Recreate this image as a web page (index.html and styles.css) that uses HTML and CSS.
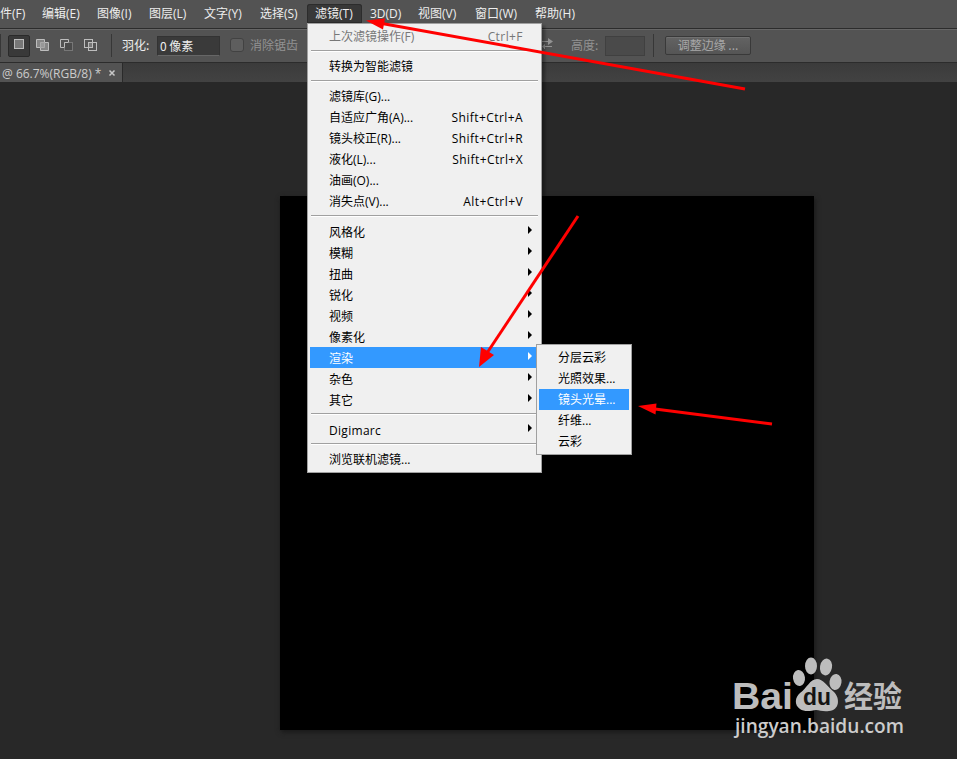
FILE: index.html
```html
<!DOCTYPE html>
<html lang="zh-CN">
<head>
    <meta charset="UTF-8">
    <title>Photoshop</title>
    <link rel="stylesheet" href="styles.css">
</head>
<body>
    <div class="app">
        <div class="menu-bar">
            <div class="menu-title">文件(F)</div>
            <div class="menu-title">编辑(E)</div>
            <div class="menu-title">图像(I)</div>
            <div class="menu-title">图层(L)</div>
            <div class="menu-title">文字(Y)</div>
            <div class="menu-title">选择(S)</div>
            <div class="menu-title open">滤镜(T)</div>
            <div class="menu-title">3D(D)</div>
            <div class="menu-title">视图(V)</div>
            <div class="menu-title">窗口(W)</div>
            <div class="menu-title">帮助(H)</div>
        </div>

        <div class="options-bar">
            <div class="options-left">
                <div class="divider"></div>
                <div class="mode active">
                    <svg width="16" height="16"><rect x="3.5" y="2.5" width="9" height="9" fill="#777" stroke="#bbb"/></svg>
                </div>
                <div class="mode">
                    <svg width="16" height="16"><path d="M2.5 2.5h8v3h4v8h-8v-3h-4z" fill="#858585" stroke="#bdbdbd"/><path d="M6.500 10.500v-5h4v5z" fill="#989898" stroke="#a8a8a8"/></svg>
                </div>
                <div class="mode">
                    <svg width="16" height="16"><rect x="6.500" y="5.500" width="8" height="8" fill="#4b4b4b" stroke="#777"/><path d="M6 10.500H2.500v-8h8V5M6.500 10.500v-5h4" fill="none" stroke="#bdbdbd"/></svg>
                </div>
                <div class="mode">
                    <svg width="16" height="16"><rect x="2.500" y="2.500" width="8" height="8" fill="none" stroke="#bdbdbd"/><rect x="6.500" y="5.500" width="8" height="8" fill="none" stroke="#bdbdbd"/><rect x="7" y="6" width="3" height="4" fill="#777"/></svg>
                </div>
                <div class="divider second"></div>
                <div class="label">羽化:</div>
                <div class="field">0 像素</div>
                <div class="checkbox"></div>
                <div class="label dim">消除锯齿</div>
            </div>
            <div class="options-right">
                <svg class="swap" width="13" height="14"><path d="M0 4.500h8M3 9.500h8M3.500 9v3" fill="none" stroke="#929292"/><path d="M7 1l5 3.500-5 3.500zM4 7L1 9.500 4 12z" fill="#929292"/></svg>
                <div class="label height-label">高度:</div>
                <div class="field empty"></div>
                <div class="divider third"></div>
                <div class="refine">调整边缘 ...</div>
            </div>
        </div>

        <div class="tab-bar">
            <div class="tab">
                <span class="tab-name">@ 66.7%(RGB/8) *</span>
                <svg width="8" height="8"><path d="M1.500 1.500l5 5M6.500 1.500l-5 5" stroke="#c8c8c8" stroke-width="1.500"/></svg>
            </div>
        </div>

        <div class="workspace">
            <div class="document"></div>
        </div>

        <div class="menu filter-menu">
            <div class="row disabled"><span>上次滤镜操作(F)</span><span class="key">Ctrl+F</span></div>
            <div class="sep"></div>
            <div class="row"><span>转换为智能滤镜</span></div>
            <div class="sep"></div>
            <div class="row"><span>滤镜库(G)...</span></div>
            <div class="row"><span>自适应广角(A)...</span><span class="key">Shift+Ctrl+A</span></div>
            <div class="row"><span>镜头校正(R)...</span><span class="key">Shift+Ctrl+R</span></div>
            <div class="row"><span>液化(L)...</span><span class="key">Shift+Ctrl+X</span></div>
            <div class="row"><span>油画(O)...</span></div>
            <div class="row"><span>消失点(V)...</span><span class="key">Alt+Ctrl+V</span></div>
            <div class="sep"></div>
            <div class="row sub"><span>风格化</span></div>
            <div class="row sub"><span>模糊</span></div>
            <div class="row sub"><span>扭曲</span></div>
            <div class="row sub"><span>锐化</span></div>
            <div class="row sub"><span>视频</span></div>
            <div class="row sub"><span>像素化</span></div>
            <div class="row sub selected"><span>渲染</span></div>
            <div class="row sub"><span>杂色</span></div>
            <div class="row sub"><span>其它</span></div>
            <div class="sep"></div>
            <div class="row sub"><span class="digimarc">Digimarc</span></div>
            <div class="sep"></div>
            <div class="row"><span>浏览联机滤镜...</span></div>
        </div>

        <div class="menu render-menu">
            <div class="row"><span>分层云彩</span></div>
            <div class="row"><span>光照效果...</span></div>
            <div class="row selected"><span>镜头光晕...</span></div>
            <div class="row"><span>纤维...</span></div>
            <div class="row"><span>云彩</span></div>
        </div>

        <!-- red pointer arrows -->
        <svg class="arrows" width="957" height="759" viewBox="0 0 957 759">
            <g stroke="#f00" stroke-width="3">
                <path d="M382 23.500L745 89"/>
                <path d="M578 216L487 353"/>
                <path d="M655 409L772 424"/>
            </g>
            <g fill="#f00">
                <path d="M366 20.500L385 18.500L383 29.500z"/>
                <path d="M479 367L481 347L494 355z"/>
                <path d="M638 406L656.500 403.500L655.500 414.500z"/>
            </g>
        </svg>

        <svg class="watermark" width="190" height="100" viewBox="725 645 190 100">
            <g fill="#bdbdbd">
                <text class="wm-bai" x="732" y="709" textLength="61" lengthAdjust="spacingAndGlyphs">Bai</text>
                <ellipse cx="799" cy="678" rx="6" ry="8" transform="rotate(-8 799 678)"/>
                <ellipse cx="811" cy="666" rx="6" ry="8.500"/>
                <ellipse cx="826" cy="667" rx="6" ry="8.500" transform="rotate(10 826 667)"/>
                <ellipse cx="835.500" cy="682" rx="6" ry="8" transform="rotate(8 835.500 682)"/>
                <path d="M817 679C823 679 827 686 834 692C840 698 840 710 829 711C823 712 820 710 816 710C811 711 804 712 800 709C794 705 795 697 800 693C807 688 810 679 817 679z"/>
                <text class="wm-cn" x="844" y="707" textLength="58" lengthAdjust="spacingAndGlyphs">经验</text>
            </g>
            <text class="wm-du" x="803" y="705" textLength="28" lengthAdjust="spacingAndGlyphs">du</text>
            <text class="wm-url" x="735" y="733" textLength="169" lengthAdjust="spacingAndGlyphs">jingyan.baidu.com</text>
        </svg>
    </div>
</body>
</html>
```

FILE: styles.css
```css
body {
    margin: 0;
    background: #282828;
    font-family: "Open Sans", "Noto Sans CJK SC", sans-serif;
    font-size: 12px;
}

.app {
    position: relative;
    display: flex;
    flex-direction: column;
    width: 957px;
    height: 759px;
    overflow: hidden;
}

.menu-bar {
    display: grid;
    grid-template-columns: 54px 55px 52px 55px 56px 55px 55px 48px 57px 60px 60px;
    height: 24px;
    padding: 4px 0 0;
    margin-left: -20px;
    background: #535353;
    color: #eee;
    line-height: 20px;
    white-space: nowrap;
}

.menu-title {
    height: 19px;
    padding-left: 8px;
}

.menu-title.open {
    background: #383838;
    border-radius: 3px 3px 0 0;
    box-shadow: inset 0 0 0 1px #2c2c2c;
}

.options-bar {
    display: flex;
    box-sizing: border-box;
    height: 35px;
    background: #535353;
    border-top: 1px solid #2c2c2c;
    border-bottom: 1px solid #2c2c2c;
    box-shadow: inset 0 1px #666;
    color: #eee;
    font-family: "Noto Sans CJK SC", sans-serif;
}

.options-left,
.options-right {
    display: flex;
    align-items: center;
    white-space: nowrap;
}

.options-left {
    width: 541px;
}

.divider {
    width: 1px;
    height: 23px;
    background: #373737;
}

.mode {
    display: flex;
    align-items: center;
    justify-content: center;
    width: 24px;
    height: 22px;
}

.mode svg {
    margin-top: -2px;
}

.mode.active {
    box-sizing: border-box;
    width: 22px;
    margin: 0 0 0 7px;
    background: #393939;
    border: 1px solid #2a2a2a;
    border-radius: 2px;
}

.divider.second {
    margin: 0 10px 0 9px;
}

.label {
    width: 35px;
    margin-top: -2px;
}

.field {
    box-sizing: border-box;
    width: 63px;
    height: 20px;
    padding-left: 2px;
    background: #3a3a3a;
    border: 1px solid #333;
    border-bottom-color: #666;
    line-height: 17px;
}

.checkbox {
    box-sizing: border-box;
    width: 14px;
    height: 14px;
    margin: -1px 6px 0 10px;
    background: #5e5e5e;
    border: 1px solid #424242;
    border-radius: 3px;
}

.dim,
.height-label {
    color: #929292;
}

.swap {
    margin-top: -3px;
}

.height-label {
    width: 34px;
    margin-top: -3px;
    margin-left: 17px;
}

.field.empty {
    width: 40px;
    background: #4a4a4a;
    border-color: #404040;
}

.divider.third {
    margin: 0 11px 0 8px;
}

.refine {
    box-sizing: border-box;
    width: 86px;
    height: 19px;
    border: 1px solid #393939;
    border-radius: 2px;
    background: linear-gradient(#636363, #555);
    box-shadow: inset 0 1px #707070;
    color: #a8a8a8;
    line-height: 16px;
    text-align: center;
}

.tab-bar {
    height: 19px;
    background: linear-gradient(#3b3b3b, #424242);
}

.tab {
    display: flex;
    align-items: center;
    box-sizing: border-box;
    width: 123px;
    height: 19px;
    padding-left: 2px;
    background: #535353;
    border-right: 1px solid #2a2a2a;
    color: #ccc;
}

.tab-name {
    width: 106px;
    padding-top: 2px;
    white-space: nowrap;
}

.workspace {
    display: flow-root;
    flex: 1;
    background: #282828;
}

.document {
    width: 534px;
    height: 534px;
    margin: 114px 0 0 280px;
    background: #000;
    box-shadow: 1px 2px 5px #181818;
}

.menu {
    position: absolute;
    box-sizing: border-box;
    padding: 2px;
    background: #f0f0f0;
    border: 1px solid #a0a0a0;
    color: #000;
}

.filter-menu {
    left: 307px;
    top: 23px;
    width: 235px;
    box-shadow: 3px 3px 3px rgba(0, 0, 0, 0.35);
}

.render-menu {
    left: 536px;
    top: 344px;
    width: 96px;
}

.row {
    display: flex;
    align-items: center;
    justify-content: space-between;
    height: 21px;
    padding: 0 16px 0 19px;
    line-height: 21px;
    white-space: nowrap;
}

.render-menu .row {
    padding: 0 0 0 19px;
}

.row.disabled {
    color: #777;
}

.row.selected {
    background: #3399ff;
    color: #fff;
}

.row.sub span {
    padding-top: 2px;
}

.row.sub::after {
    content: "";
    margin: -4px -9px 0 0;
    border: 4px solid transparent;
    border-left-color: currentColor;
    border-right-width: 0;
}

.key {
    letter-spacing: 0.42px;
}

.digimarc {
    letter-spacing: 0.3px;
}

.sep {
    height: 1px;
    margin: 3px 1px 4px;
    background: #a0a0a0;
    border-bottom: 1px solid #fff;
}

.arrows {
    position: absolute;
    left: 0;
    top: 0;
}

.watermark {
    position: absolute;
    left: 725px;
    top: 645px;
}

.wm-bai {
    font: bold 37px "Liberation Sans", sans-serif;
}

.wm-du {
    font: bold 23px "Liberation Sans", sans-serif;
    fill: #141414;
}

.wm-cn {
    font: bold 30px "Noto Sans CJK SC", sans-serif;
}

.wm-url {
    font: 600 20px "Open Sans", sans-serif;
    fill: #ccc;
}
```
